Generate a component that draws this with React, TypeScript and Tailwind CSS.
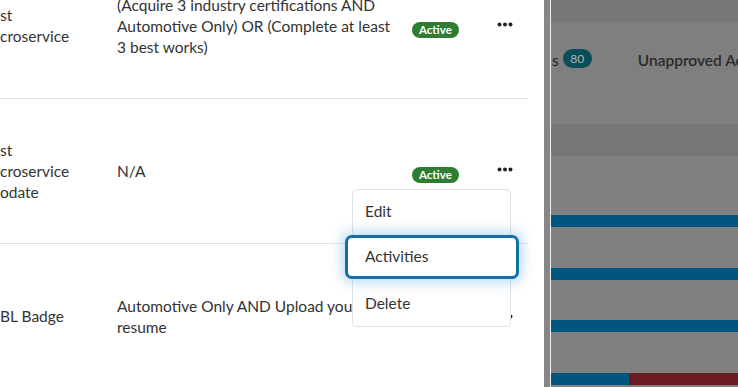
import React from "react";

function Badge() {
  return (
    <span className="inline-flex h-[16px] items-center rounded-full bg-[#2f7d34] px-[7px] text-[11.5px] font-bold leading-none text-white">
      Active
    </span>
  );
}

function Dots() {
  return (
    <svg width="16" height="5" viewBox="0 0 16 5" className="block">
      <circle cx="2.5" cy="2.5" r="2" fill="#222" />
      <circle cx="8" cy="2.5" r="2" fill="#222" />
      <circle cx="13.5" cy="2.5" r="2" fill="#222" />
    </svg>
  );
}

function Row({
  name,
  rule,
  badgeOffset,
  dotsOffset,
  border = true,
  showDots = true,
}: {
  name: string[];
  rule: string[];
  badgeOffset: number;
  dotsOffset: number;
  border?: boolean;
  showDots?: boolean;
}) {
  return (
    <div
      className={
        "flex h-[145px] w-[528px] items-center " +
        (border ? "border-b border-[#dee2e6]" : "")
      }
    >
      <div className="w-[117px] shrink-0 leading-[21px]">
        {name.map((n, i) => (
          <div key={i} className="whitespace-nowrap">
            {n}
          </div>
        ))}
      </div>
      <div className="w-[295px] shrink-0 leading-[21px]">
        {rule.map((n, i) => (
          <div key={i} className="whitespace-nowrap">
            {n}
          </div>
        ))}
      </div>
      <div className="w-[85px] shrink-0" style={{ marginTop: badgeOffset }}>
        <Badge />
      </div>
      <div className="w-[20px] shrink-0" style={{ marginTop: dotsOffset }}>
        {showDots && <Dots />}
      </div>
    </div>
  );
}

export default function App() {
  return (
    <div
      className="relative flex h-[387px] w-[738px] overflow-hidden bg-[#808080] text-[15.5px] text-[#333]"
      style={{ fontFamily: "Lato, 'Noto Sans', sans-serif" }}
    >
      {/* left white panel */}
      <div className="relative h-full w-[544px] shrink-0 overflow-hidden bg-white">
        <div className="mt-[-46px]">
          <Row
            name={["st", "croservice"]}
            rule={[
              "(Acquire 3 industry certifications AND",
              "Automotive Only) OR (Complete at least",
              "3 best works)",
            ]}
            badgeOffset={5}
            dotsOffset={-3}
          />
          <Row
            name={["st", "croservice", "odate"]}
            rule={["N/A"]}
            badgeOffset={5}
            dotsOffset={-3}
          />
          <Row
            name={["BL Badge"]}
            rule={["Automotive Only AND Upload your", "resume"]}
            badgeOffset={0}
            dotsOffset={0}
            border={false}
          />
        </div>

        {/* dropdown menu */}
        <div className="absolute left-[352px] top-[189px] h-[138px] w-[159px] rounded-[5px] border border-[#dee2e6] bg-white">
          <div className="flex h-[44px] items-center pl-[12px]">Edit</div>
          <div className="h-[47px]" />
          <div className="flex h-[45px] items-center pl-[12px]">Delete</div>
        </div>
        <div className="absolute left-[345px] top-[235px] flex h-[44px] w-[174px] items-center rounded-[7px] border-[3px] border-[#1170aa] bg-white pl-[17px] shadow-[0_0_12px_4px_rgba(120,180,230,0.45)]">
          Activities
        </div>
      </div>

      {/* scroll strip */}
      <div className="h-full w-[6px] shrink-0 bg-[#868686]" />
      <div className="h-full w-[1px] shrink-0 bg-[#f2f2f2]" />

      {/* dimmed background page */}
      <div className="flex h-full min-w-0 flex-1 flex-col overflow-hidden">
        <div className="h-[22px] shrink-0 bg-[#777777]" />
        <div className="flex h-[102px] shrink-0 items-start bg-[#7f7f7f] pt-[26px] text-[#222]">
          <span className="ml-[1px] mt-[1px] shrink-0 text-[15.5px]">s</span>
          <span className="ml-[4px] mt-[1px] flex h-[19px] w-[29px] shrink-0 items-center justify-center rounded-full bg-[#0b4e58] text-[12px] text-[#a9b8bb]">
            80
          </span>
          <span className="ml-[46px] mt-[1px] shrink-0 whitespace-nowrap text-[15.5px] font-semibold text-[#2a2a2a]">
            Unapproved Activities
          </span>
        </div>
        <div className="h-[32px] shrink-0 bg-[#767676]" />
        <div className="h-[59px] shrink-0" />
        <div className="h-[12px] shrink-0 bg-[#00567f]" />
        <div className="h-[41px] shrink-0" />
        <div className="h-[12px] shrink-0 bg-[#00567f]" />
        <div className="h-[40px] shrink-0" />
        <div className="h-[12px] shrink-0 bg-[#00567f]" />
        <div className="h-[41px] shrink-0" />
        <div className="flex h-[12px] shrink-0">
          <div className="w-[78px] bg-[#00567f]" />
          <div className="flex-1 bg-[#6c1a22]" />
        </div>
      </div>
    </div>
  );
}
